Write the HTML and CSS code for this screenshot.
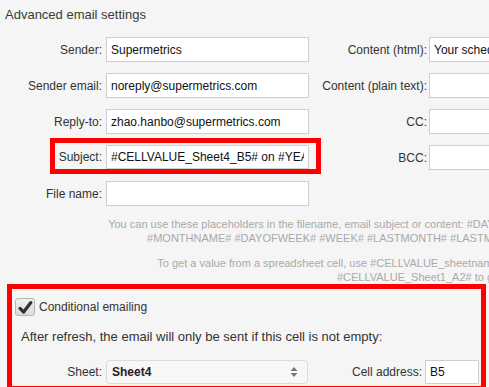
FILE: index.html
```html
<!doctype html>
<html>
  <head>
    <title>Advanced email settings</title>
    <link rel="stylesheet" href="styles.css">
  </head>
  <body>
    <div id="wrap">
      <h2 class="title">Advanced email settings</h2>
      <div class="columns">
        <div class="col col-left">
          <div class="row">
            <label class="label">Sender:</label>
            <input class="field" type="text" value="Supermetrics">
          </div>
          <div class="row">
            <label class="label">Sender email:</label>
            <input class="field" type="text" value="noreply@supermetrics.com">
          </div>
          <div class="row">
            <label class="label">Reply-to:</label>
            <input class="field" type="text" value="zhao.hanbo@supermetrics.com">
          </div>
          <div class="row row-marked">
            <label class="label">Subject:</label>
            <input class="field" type="text" value="#CELLVALUE_Sheet4_B5# on #YEAR#-#MONTH#-#DAY#">
          </div>
          <div class="row">
            <label class="label">File name:</label>
            <input class="field" type="text" value="">
          </div>
        </div>
        <div class="col col-right">
          <div class="row">
            <label class="label">Content (html):</label>
            <input class="field" type="text" value="Your scheduled report is attached.">
          </div>
          <div class="row">
            <label class="label">Content (plain text):</label>
            <input class="field" type="text" value="">
          </div>
          <div class="row">
            <label class="label">CC:</label>
            <input class="field" type="text" value="">
          </div>
          <div class="row">
            <label class="label">BCC:</label>
            <input class="field" type="text" value="">
          </div>
        </div>
      </div>

      <div class="help">
        <p>You can use these placeholders in the filename, email subject or content: #DAY# #MONTH# #YEAR# #HOUR# #MINUTE# #YESTERDAY# #LASTWEEK# #LASTYEAR#<br>
        #MONTHNAME# #DAYOFWEEK# #WEEK# #LASTMONTH# #LASTMONTHNAME# #LASTYEAR# #LASTWEEK# #YESTERDAY# #QUARTER# #DAY#</p>
        <p>To get a value from a spreadsheet cell, use #CELLVALUE_sheetname_cell#, where sheetname is the sheet and cell is the cell's address, for example:<br>
        #CELLVALUE_Sheet1_A2# to get the values of cell A2, in the sheet Sheet1.</p>
      </div>

      <div class="conditional">
        <div class="check-row">
          <span class="checkbox">
            <svg width="20" height="18" viewBox="0 0 20 18">
              <path d="M4.5 9.5 L8.5 13.5 L16.5 3" fill="none" stroke="#333" stroke-width="3.6" stroke-linecap="round" stroke-linejoin="round"/>
            </svg>
          </span>
          <span class="check-label">Conditional emailing</span>
        </div>
        <p class="note">After refresh, the email will only be sent if this cell is not empty:</p>
        <div class="cell-row">
          <label class="label">Sheet:</label>
          <div class="select">
            <span class="select-value">Sheet4</span>
            <span class="select-arrows">
              <svg width="8" height="12" viewBox="0 0 8 12">
                <path d="M4 1 L7.5 5 L0.5 5 Z" fill="#777"/>
                <path d="M4 11 L7.5 7 L0.5 7 Z" fill="#777"/>
              </svg>
            </span>
          </div>
          <label class="label label-cell">Cell address:</label>
          <input class="field field-cell" type="text" value="B5">
        </div>
      </div>
    </div>
  </body>
</html>
```

FILE: styles.css
```css
html, body {
  margin: 0;
  overflow: hidden;
}

body {
  font-family: "Liberation Sans", Arial, sans-serif;
  background-color: #f5f5f5;
  color: #333;
}

#wrap {
  width: 680px;
}

h2.title {
  margin: 0;
  padding: 7px 0 0 5px;
  font-size: 13px;
  line-height: 16px;
  font-weight: normal;
  color: #3a3a3a;
}

.columns {
  display: flex;
  margin-top: 14px;
}

.row {
  display: flex;
  align-items: center;
  height: 25px;
  margin-bottom: 11px;
}

.label {
  font-size: 12px;
  color: #333;
  text-align: right;
  white-space: nowrap;
}

.col-left .label {
  width: 102px;
  padding-right: 4px;
}

.col-right .label {
  width: 118px;
  padding-right: 2px;
}

.field {
  box-sizing: border-box;
  height: 25px;
  margin: 0;
  padding: 0 4px;
  border: 1px solid #cfcfcf;
  background: #fff;
  font-family: "Liberation Sans", Arial, sans-serif;
  font-size: 12px;
  color: #111;
  outline: none;
}

.col-left .field {
  width: 203px;
}

.col-right .field {
  width: 220px;
}

.row-marked {
  position: relative;
  height: 24px;
  margin-bottom: 12px;
}

.row-marked .field {
  height: 24px;
}

.row-marked::after {
  content: "";
  position: absolute;
  left: 50px;
  top: -7px;
  width: 271px;
  height: 36px;
  box-sizing: border-box;
  border: 5px solid #ff0000;
}

.help {
  width: 1044px;
  text-align: center;
  font-size: 11px;
  line-height: 14px;
  color: #a9a9a9;
}

.help p {
  margin: 0 0 11px 0;
}

.help p:last-child {
  margin-bottom: 0;
}

.conditional {
  box-sizing: border-box;
  width: 479px;
  margin-left: 7px;
  padding: 9px 2px 2px 0;
  border: 5px solid #ff0000;
}

.check-row {
  display: flex;
  align-items: center;
  height: 18px;
  padding-left: 3px;
}

.checkbox {
  box-sizing: border-box;
  width: 20px;
  height: 18px;
  border: 1px solid #b5b5b5;
  border-radius: 3px;
  background: linear-gradient(#efefef, #dcdcdc);
  display: flex;
}

.checkbox svg {
  display: block;
}

.check-label {
  margin-left: 4px;
  font-size: 12px;
  color: #333;
}

.note {
  margin: 13px 0 0 9px;
  font-size: 13px;
  line-height: 16px;
  color: #333;
}

.cell-row {
  display: flex;
  align-items: center;
  height: 24px;
  margin-top: 15px;
}

.cell-row .label {
  width: 90px;
  padding-right: 4px;
}

.select {
  box-sizing: border-box;
  width: 202px;
  height: 24px;
  display: flex;
  align-items: center;
  justify-content: space-between;
  padding: 0 9px 0 5px;
  border: 1px solid #dadada;
  border-radius: 4px;
  background: #f7f7f7;
}

.select-value {
  font-size: 12px;
  font-weight: bold;
  color: #222;
}

.select-arrows svg {
  display: block;
}

.cell-row .label-cell {
  width: auto;
  flex: 1;
  padding-right: 3px;
}

.field-cell {
  width: 54px;
  height: 24px;
}
```
